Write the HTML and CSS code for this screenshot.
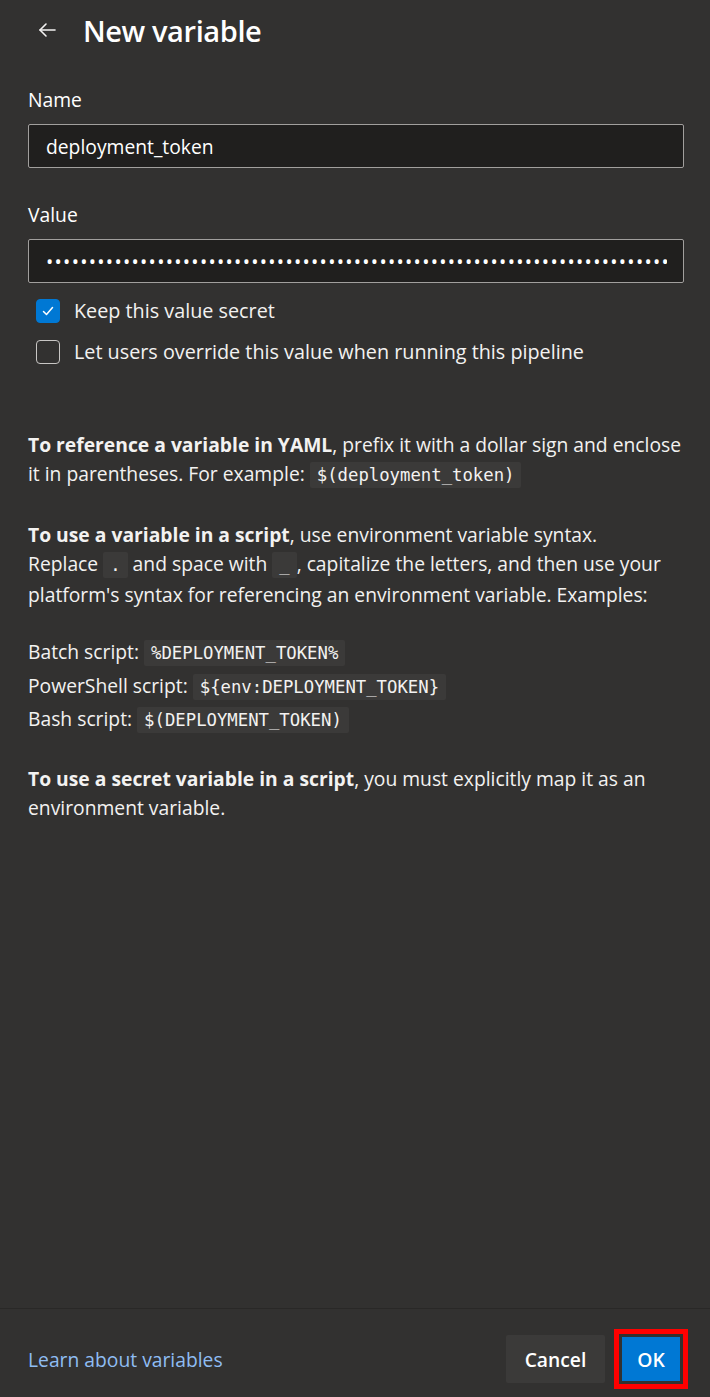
FILE: index.html
```html
<!DOCTYPE html>
<html lang="en">
<head>
  <meta charset="UTF-8">
  <meta name="viewport" content="width=device-width, initial-scale=1.0">
  <title>New variable</title>
  <link rel="stylesheet" href="styles.css">
</head>
<body>
  <div class="panel">
    <div class="panel-header">
      <button class="back-btn" type="button" aria-label="Back">
        <svg width="20" height="20" viewBox="0 0 20 20" fill="none" stroke="currentColor" stroke-width="1.6" stroke-linecap="round" stroke-linejoin="round">
          <path d="M18 10H3"/>
          <path d="M9 4L3 10L9 16"/>
        </svg>
      </button>
      <h1>New variable</h1>
    </div>

    <div class="panel-body">
      <div class="field">
        <label for="name">Name</label>
        <input type="text" id="name" class="text-input" value="deployment_token">
      </div>

      <div class="field">
        <label for="value">Value</label>
        <input type="password" id="value" class="text-input secret" value="xxxxxxxxxxxxxxxxxxxxxxxxxxxxxxxxxxxxxxxxxxxxxxxxxxxxxxxxxxxxxxxxxxxxxxxxxxxxxxxxxxxxxxxx">
      </div>

      <div class="checks">
        <label class="check">
          <span class="box checked">
            <svg width="14" height="14" viewBox="0 0 14 14" fill="none" stroke="#fff" stroke-width="1.5" stroke-linecap="round" stroke-linejoin="round"><path d="M2.5 7.5L5.5 10.5L11.5 3.5"/></svg>
          </span>
          Keep this value secret
        </label>
        <label class="check">
          <span class="box"></span>
          Let users override this value when running this pipeline
        </label>
      </div>

      <div class="help">
        <p><b>To reference a variable in YAML</b>, prefix it with a dollar sign and enclose it in parentheses. For example: <code>$(deployment_token)</code></p>

        <p><b>To use a variable in a script</b>, use environment variable syntax.<br>
        Replace <code>.</code> and space with <code>_</code>, capitalize the letters, and then use your platform's syntax for referencing an environment variable. Examples:</p>

        <div class="examples">
          <div>Batch script: <code>%DEPLOYMENT_TOKEN%</code></div>
          <div>PowerShell script: <code>${env:DEPLOYMENT_TOKEN}</code></div>
          <div>Bash script: <code>$(DEPLOYMENT_TOKEN)</code></div>
        </div>

        <p><b>To use a secret variable in a script</b>, you must explicitly map it as an environment variable.</p>
      </div>
    </div>

    <div class="panel-footer">
      <a href="#" class="learn-link">Learn about variables</a>
      <div class="actions">
        <button type="button" class="btn btn-cancel">Cancel</button>
        <span class="highlight"><button type="button" class="btn btn-ok">OK</button></span>
      </div>
    </div>
  </div>
</body>
</html>
```

FILE: styles.css
```css
body {
  margin: 0;
  background-color: #323130;
  color: #f3f2f1;
  font-family: "Open Sans", "Noto Sans", Arial, sans-serif;
  font-size: 19.3px;
}
.panel {
  display: flex;
  flex-direction: column;
  height: 100vh;
}
.panel-header {
  display: flex;
  align-items: center;
  gap: 26px;
  padding: 10px 28px 0 28px;
  height: 40px;
}
.back-btn {
  background: none;
  border: none;
  color: #f3f2f1;
  padding: 0 0 0 9px;
  display: flex;
  cursor: pointer;
}
.panel-header h1 {
  margin: 0;
  font-size: 29px;
  font-weight: 600;
  letter-spacing: -0.4px;
  color: #ffffff;
}
.panel-body {
  flex: 1;
  padding: 37px 26px 0 28px;
}
.field {
  margin-bottom: 34px;
}
.field label {
  display: block;
  font-size: 19.3px;
  line-height: 26px;
  margin-bottom: 11px;
  color: #ffffff;
}
.text-input {
  box-sizing: border-box;
  width: 100%;
  height: 44px;
  padding: 0 16px 0 17px;
  background-color: #201f1e;
  border: 1px solid #a19f9d;
  border-radius: 2px;
  color: #ffffff;
  font-family: inherit;
  font-size: 19.3px;
  outline: none;
}
.text-input.secret {
  letter-spacing: 1.3px;
}
.checks {
  margin-top: -18px;
  padding-left: 8px;
  display: flex;
  flex-direction: column;
  gap: 17px;
}
.check {
  display: flex;
  align-items: center;
  gap: 14px;
  line-height: 24px;
  font-size: 19.8px;
  color: #f3f2f1;
}
.box {
  box-sizing: border-box;
  width: 24px;
  height: 24px;
  border: 1px solid #c8c6c4;
  border-radius: 4px;
  display: flex;
  align-items: center;
  justify-content: center;
}
.box.checked {
  background-color: #0078d4;
  border-color: #0078d4;
}
.help {
  margin-top: 66px;
  line-height: 29px;
}
.help p {
  margin: 0 0 30px 0;
}
.help b {
  font-weight: 700;
}
.examples {
  margin: -3px 0 27px 0;
}
.examples div {
  line-height: 32.5px;
}
code {
  font-family: "DejaVu Sans Mono", "Liberation Mono", monospace;
  font-size: 17.3px;
  background-color: #3b3a39;
  padding: 3px 7px;
  border-radius: 2px;
}
.panel-footer {
  box-sizing: border-box;
  display: flex;
  align-items: center;
  justify-content: space-between;
  border-top: 1px solid #292827;
  padding: 12px 22px 0 28px;
  height: 89px;
}
.learn-link {
  color: #8fbdf3;
  text-decoration: none;
  font-size: 19.3px;
}
.actions {
  display: flex;
  align-items: center;
  gap: 9px;
}
.btn {
  border: none;
  border-radius: 2px;
  height: 48px;
  font-family: inherit;
  font-size: 19.3px;
  font-weight: 600;
  color: #ffffff;
  cursor: pointer;
}
.btn-cancel {
  background-color: #3b3a39;
  padding: 0 18px;
  width: 99px;
}
.highlight {
  display: flex;
  border: 5px solid #ff0000;
  padding: 3px;
}
.btn-ok {
  background-color: #0078d4;
  width: 58px;
  height: 44px;
  border-radius: 0;
}
```
